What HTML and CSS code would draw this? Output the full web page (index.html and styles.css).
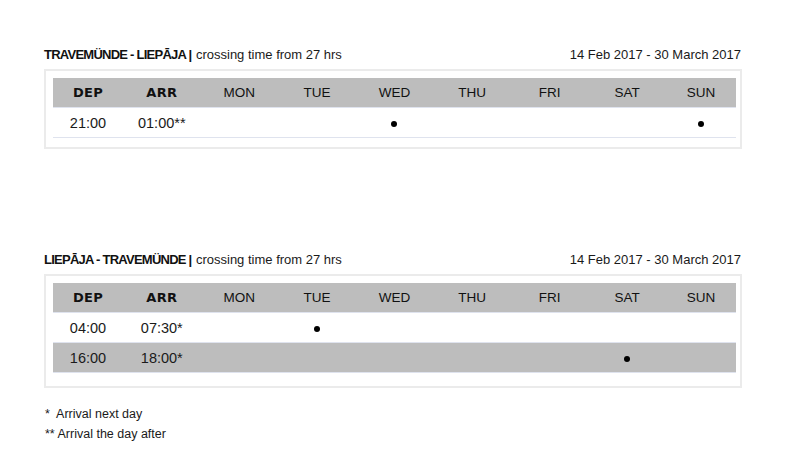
FILE: index.html
```html
<!DOCTYPE html>
<html>
<head>
<meta charset="utf-8">
<link rel="stylesheet" href="styles.css">
</head>
<body>
<section class="route">
  <div class="route-head">
    <div class="title"><span class="name">TRAVEMÜNDE - LIEPĀJA |</span> <span class="sub">crossing time from 27 hrs</span></div>
    <div class="period">14 Feb 2017 - 30 March 2017</div>
  </div>
  <div class="box">
    <div class="grid head">
      <div class="b">DEP</div><div class="b">ARR</div><div>MON</div><div>TUE</div><div>WED</div><div>THU</div><div>FRI</div><div>SAT</div><div>SUN</div>
    </div>
    <div class="grid row">
      <div>21:00</div><div>01:00**</div><div></div><div></div><div><span class="dot"></span></div><div></div><div></div><div></div><div><span class="dot"></span></div>
    </div>
  </div>
</section>

<section class="route second">
  <div class="route-head">
    <div class="title"><span class="name">LIEPĀJA - TRAVEMÜNDE |</span> <span class="sub">crossing time from 27 hrs</span></div>
    <div class="period">14 Feb 2017 - 30 March 2017</div>
  </div>
  <div class="box">
    <div class="grid head">
      <div class="b">DEP</div><div class="b">ARR</div><div>MON</div><div>TUE</div><div>WED</div><div>THU</div><div>FRI</div><div>SAT</div><div>SUN</div>
    </div>
    <div class="grid row">
      <div>04:00</div><div>07:30*</div><div></div><div><span class="dot"></span></div><div></div><div></div><div></div><div></div><div></div>
    </div>
    <div class="grid row alt">
      <div>16:00</div><div>18:00*</div><div></div><div></div><div></div><div></div><div></div><div><span class="dot"></span></div><div></div>
    </div>
  </div>
</section>

<div class="notes">
  <div>*&nbsp; Arrival next day</div>
  <div>** Arrival the day after</div>
</div>
</body>
</html>
```

FILE: styles.css
```css
html, body { margin: 0; padding: 0; background: #fff; }
body {
  font-family: "Liberation Sans", Arial, sans-serif;
  color: #1a1a1a;
  padding: 44px 46px 0 44px;
  width: 698px;
}
.route-head {
  display: flex;
  justify-content: space-between;
  align-items: baseline;
  height: 24px;
  padding-top: 1px;
}
.title .name {
  font-family: "Liberation Sans", Arial, sans-serif;
  font-weight: bold;
  font-size: 13px;
  letter-spacing: -0.75px;
  color: #111;
}
.title .sub { font-size: 13px; }
.period { font-size: 13px; padding-right: 1px; }
.box {
  border: 2px solid #ebebeb;
  padding: 7px 4px 9px 7px;
}
.second { margin-top: 100px; }
.second .box { padding-bottom: 13px; }
.grid {
  display: grid;
  grid-template-columns: 70px repeat(7, 1fr) 70px;
  align-items: center;
  text-align: center;
  font-size: 14.5px;
  height: 29px;
}
.head {
  background: #bdbdbd;
  border-bottom: 1px solid #dfe3ee;
  font-size: 13.5px;
  color: #111;
}
.head .b {
  font-family: "DejaVu Sans", sans-serif;
  font-weight: bold;
  font-size: 13px;
  letter-spacing: 0.3px;
}
.row { border-bottom: 1px solid #dfe3ee; }
.row.alt { background: #bdbdbd; }
.dot {
  display: inline-block;
  width: 6px;
  height: 6px;
  border-radius: 50%;
  background: #000;
  vertical-align: middle;
}
.notes {
  margin-top: 16px;
  font-size: 12.5px;
  line-height: 20px;
  padding-left: 1px;
}
```
